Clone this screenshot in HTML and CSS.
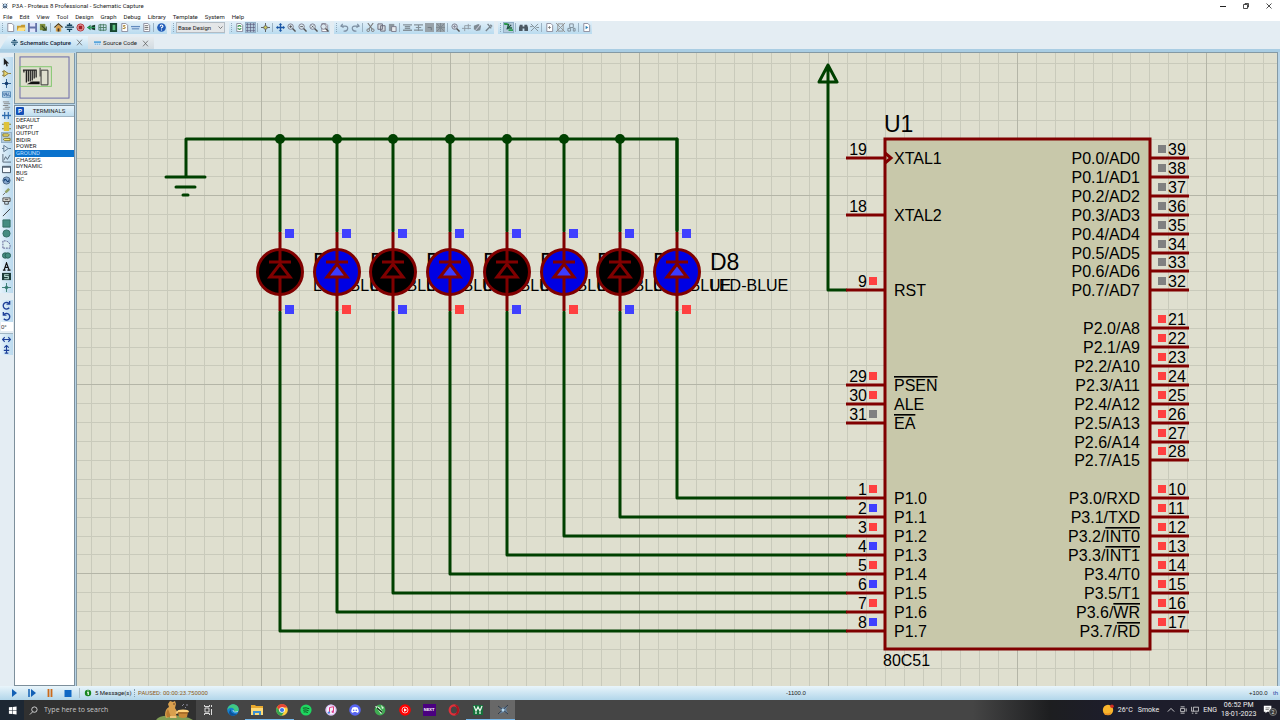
FILE: index.html
```html
<!DOCTYPE html>
<html lang="en">
<head>
<meta charset="utf-8">
<title>P3A - Proteus 8 Professional - Schematic Capture</title>
<link rel="stylesheet" href="styles.css">
</head>
<body>
<div class="app">
  <header class="titlebar">
    <svg class="app-icon" viewBox="0 0 10 10"><circle cx="5" cy="5" r="3" fill="#6d87a5"/><path d="M2 2l6 6M8 2l-6 6" stroke="#43505e"/><circle cx="5" cy="4" r="1.4" fill="#b9d5ee"/></svg>
    <h1 class="title">P3A - Proteus 8 Professional - Schematic Capture</h1>
    <div class="window-buttons">
      <button aria-label="Minimize"><svg viewBox="0 0 10 10"><path d="M2 5.5h6" stroke="#222" fill="none"/></svg></button>
      <button aria-label="Restore"><svg viewBox="0 0 10 10"><path d="M2.500 3.500h4v4h-4zM4 3.500V2.500h3.500v3.500h-1" stroke="#222" stroke-width=".8" fill="none"/></svg></button>
      <button aria-label="Close"><svg viewBox="0 0 10 10"><path d="M2.500 2.500l5 5M7.500 2.500l-5 5" stroke="#222" stroke-width=".8" fill="none"/></svg></button>
    </div>
  </header>
  <nav class="menubar">
    <button>File</button><button>Edit</button><button>View</button><button>Tool</button><button>Design</button><button>Graph</button><button>Debug</button><button>Library</button><button>Template</button><button>System</button><button>Help</button>
  </nav>
  <div class="toolbars">
    <div class="toolbar" data-icons="new open save import | home schem pcb view3d gerber explorer bom source notes | help"></div>
    <div class="toolbar"><div class="design-box"><select class="design-select" aria-label="Design"><option>Base Design</option></select><svg class="chevron" viewBox="0 0 10 10"><path d="M1 3l4 4 4-4" stroke="#555" fill="none" stroke-width="1.500"/></svg></div></div>
    <div class="toolbar" data-icons="refresh grid* | origin | pan zoomin zoomout zoomall zoomarea"></div>
    <div class="toolbar" data-icons="undo redo | cut copy paste | blockcopy blockmove blockrot blockdel | pick make pack decompose"></div>
    <div class="toolbar" data-icons="wire* | find props | newsheet delsheet exit | erc"></div>
  </div>
  <div class="tabs">
    <button class="tab tab-active" id="tab-schematic"><svg viewBox="0 0 10 10"><path d="M5 0v2M2 2.500h6M2 4.500h6M0 4.500h3M7 4.500h3M2 7h6M5 7v3" stroke="#174b6b" stroke-width="1.500"/></svg>Schematic Capture<svg class="tab-x" viewBox="0 0 10 10"><path d="M1.500 1l7 8M8.500 1l-7 8" stroke="#555"/></svg></button>
    <button class="tab" id="tab-source"><svg viewBox="0 0 10 10"><path d="M0 2h10v6H0z" fill="#cfe6f7"/><path d="M0 2h10v2H0z" fill="#3c95d6"/><path d="M1 6h8" stroke="#4c84b5" stroke-dasharray="2 1"/></svg>Source Code<svg class="tab-x" viewBox="0 0 10 10"><path d="M1.500 1l7 8M8.500 1l-7 8" stroke="#555"/></svg></button>
  </div>
  <main class="workspace">
    <div class="mode-bar">
      <div class="modes" data-icons="arrow component junction label script bus chip terminal* pin graph popup generator probe meter line rect circle arc path text symbol marker"></div>
      <div class="modes-rotate" data-icons="cw ccw"></div>
      <input class="angle" type="text" value="0°" aria-label="Rotation angle">
      <div class="modes-mirror" data-icons="mirrorx mirrory"></div>
    </div>
    <aside class="side">
      <div class="overview">
        <svg viewBox="0 0 60 51"><rect x="5" y="4" width="50" height="42" fill="none" stroke="#6969a8"/><rect x="5" y="14" width="32" height="20" fill="none" stroke="#7fc66c"/><path d="M8 17.500h14M9 17v3M11.500 17v13M13.500 17v12M15.500 17v12M17.500 17v11M19.500 17v9M21.500 17v8" stroke="#222" stroke-width="1.300" fill="none"/><path d="M12 32l5-3h8v3z" fill="#111"/><path d="M25.500 15v9M26.500 17.500h7v15h-7z" stroke="#333" fill="none"/></svg>
      </div>
      <section class="picker">
        <div class="picker-head"><button class="pick">P</button><h2>TERMINALS</h2></div>
        <ul class="terminals"><li>DEFAULT</li><li>INPUT</li><li>OUTPUT</li><li>BIDIR</li><li>POWER</li><li class="chosen">GROUND</li><li>CHASSIS</li><li>DYNAMIC</li><li>BUS</li><li>NC</li></ul>
      </section>
    </aside>
    <svg class="sheet" id="sheet" viewBox="77 53 1200 633" role="img" aria-label="Schematic sheet">
      <defs>
        <pattern id="grid" x="72" y="6" width="189" height="189" patternUnits="userSpaceOnUse">
          <path class="minor" d="M19.500 0v189M38.500 0v189M57.500 0v189M76.500 0v189M95.500 0v189M113.500 0v189M132.500 0v189M151.500 0v189M170.500 0v189M0 19.500h189M0 38.500h189M0 57.500h189M0 76.500h189M0 95.500h189M0 114.500h189M0 133.500h189M0 152.500h189M0 170.500h189"/>
          <path class="major" d="M.5 0v189M0 .5h189"/>
        </pattern>
      </defs>
      <rect x="-2000" y="-2000" width="6000" height="5000" fill="url(#grid)"/>
      <g id="drawing"></g>
    </svg>
  </main>
  <footer class="statusbar">
    <div class="sim">
      <button aria-label="Play"><svg viewBox="0 0 10 10"><path d="M3 1l5 4-5 4z" fill="#1260b5"/></svg></button>
      <button aria-label="Step"><svg viewBox="0 0 10 10"><path d="M2 1v8" stroke="#1260b5" stroke-width="1.500"/><path d="M4 1l5 4-5 4z" fill="#1260b5"/></svg></button>
      <button aria-label="Pause"><svg viewBox="0 0 10 10"><path d="M3.500 1v8M6.500 1v8" stroke="#cc6a1a" stroke-width="1.800"/></svg></button>
      <button aria-label="Stop"><svg viewBox="0 0 10 10"><path d="M1.500 2h7v7h-7z" fill="#1068c4"/></svg></button>
    </div>
    <div class="messages"><svg viewBox="0 0 10 10"><circle cx="5" cy="5" r="4" fill="#16861f"/><path d="M5 2v1M4 4.500h1.300v3" stroke="#fff" stroke-width="1.400" fill="none"/></svg>5 Message(s)</div>
    <div class="sim-state">PAUSED: 00:00:23.750000</div>
    <div class="coord-x">-1100.0</div>
    <div class="coord-y">+100.0</div>
    <div class="unit">th</div>
  </footer>
</div>
<footer class="taskbar">
  <button class="start" aria-label="Start"><svg viewBox="0 0 10 10"><path d="M1 1.500l3.700-.5v3.700H1zM5.300 1L9.500.5v4.200H5.300zM1 5.300h3.700V9L1 8.500zM5.300 5.300h4.200v4.200l-4.200-.5z" fill="#fff"/></svg></button>
  <label class="search">
    <svg class="lens" viewBox="0 0 10 10"><circle cx="6" cy="4" r="3" fill="none" stroke="#ddd"/><path d="M4 6.500L1 9.500" stroke="#ddd"/></svg>
    <input type="text" placeholder="Type here to search">
    <svg class="bear" viewBox="0 0 40 20"><path d="M0 20Q4 15 14 16Q27 14 37 20z" fill="#7f9d55"/><path d="M12 4l2-3 3 1 2-1 1 3-1 4 3 5-2 1 1 4h-5l-2-1-4 1-1-3q0-6 4-8z" fill="#d9a04e"/><path d="M12 9q-3 4-1 8h4z" fill="#b97a30"/><circle cx="18" cy="4" r=".7" fill="#422"/><path d="M14 17h6M20 13l4-2" stroke="#efc47c" stroke-width="2"/><ellipse cx="27" cy="11.500" rx="6" ry="2" fill="#ffd27a"/><path d="M22 12h10l-1 5q-4 2-8 0z" fill="#c88937"/><path d="M22 13h10" stroke="#8e561c"/><path d="M26 6l2-2M30 5l2 0M29 8l1-1" stroke="#889"/></svg>
  </label>
  <div class="apps">
    <button aria-label="Task View"><svg viewBox="0 0 12 12"><path d="M3 4h4v4H3zM2.500 1v1.500h5V1M2.500 11V9.500h5V11M9.500 1v2M9.500 5v6" stroke="#ddd" fill="none"/></svg></button>
    <button aria-label="Edge"><svg viewBox="0 0 12 12"><circle cx="6" cy="6" r="5.800" fill="#1683d0"/><path d="M.3 6C1 1 5 0 7 .3c4 .8 5 4 4.700 6-1 2-4 2-4.500.5C8 4 3 2 .3 6z" fill="#41c982"/><path d="M4 5q-1 5 6 5Q7 12.500 4 11.500 0 9 4 5z" fill="#0c529b"/><path d="M6 6q0 3 5 1.500" stroke="#e1f4ff" fill="none" stroke-width=".7"/></svg></button>
    <button class="running" aria-label="File Explorer"><svg viewBox="0 0 12 12"><path d="M0 1h4l1 1h7v9H0z" fill="#e9a92e"/><path d="M0 4h12v7H0z" fill="#ffda75"/><path d="M2 7h8v4H8V9H4v2H2z" fill="#3b8fd1"/></svg></button>
    <button class="running" aria-label="Chrome"><svg viewBox="0 0 12 12"><circle cx="6" cy="6" r="5.800" fill="#ffcf3d"/><path d="M1 3a5.800 5.800 0 0 1 10.300.5H6L3.500 7z" fill="#e64535"/><path d="M.8 3.200A5.800 5.800 0 0 0 5.600 11.800L8 8 4 7.500z" fill="#36a852"/><circle cx="6" cy="6" r="2.800" fill="#fff"/><circle cx="6" cy="6" r="2.100" fill="#3b78e7"/></svg></button>
    <button aria-label="Spotify"><svg viewBox="0 0 12 12"><circle cx="6" cy="6" r="5.600" fill="#1ed760"/><path d="M2.800 4.200q3.500-1 6.500.6M3.200 6.200q3-.8 5.400.5M3.600 8q2.300-.6 4.200.5" stroke="#152" fill="none"/></svg></button>
    <button aria-label="iTunes"><svg viewBox="0 0 12 12"><circle cx="6" cy="6" r="5.500" fill="#f5f0fb"/><circle cx="6" cy="6" r="5" fill="none" stroke="#c8a0ef" stroke-width=".8"/><path d="M4.500 8.500V3.500L8.500 2.700v5" stroke="#e13a80" fill="none"/><circle cx="3.900" cy="8.600" r="1.200" fill="#4f8eea"/><circle cx="7.800" cy="7.800" r="1.200" fill="#dc4292"/></svg></button>
    <button aria-label="Discord"><svg viewBox="0 0 12 12"><circle cx="6" cy="6" r="5.800" fill="#5865f2"/><path d="M3.500 3.500q2.500-1 5 0 1.300 2 1.200 4.500L8 9l-.7-1H4.700L4 9l-1.700-1q-.1-2.500 1.200-4.500z" fill="#fff"/><circle cx="4.700" cy="6.200" r=".8" fill="#5865f2"/><circle cx="7.300" cy="6.200" r=".8" fill="#5865f2"/></svg></button>
    <button aria-label="Game"><svg viewBox="0 0 12 12"><circle cx="6" cy="6" r="5.400" fill="#3fae52"/><path d="M1 2l4 1 4 5-2 2z" fill="#e8f3e8"/><path d="M3 3l6 5-1 1-5-4z" fill="#123d19"/><path d="M7 1l3 3-2 1z" fill="#dff0df"/></svg></button>
    <button aria-label="YouTube Music"><svg viewBox="0 0 12 12"><circle cx="6" cy="6" r="5.800" fill="#f00"/><circle cx="6" cy="6" r="3" fill="none" stroke="#fff" stroke-width=".7"/><path d="M5 4.300l3 1.700-3 1.700z" fill="#fff"/></svg></button>
    <button aria-label="NEXT"><span class="next-logo">NEXT</span></button>
    <button aria-label="Opera"><svg viewBox="0 0 12 12"><ellipse cx="6" cy="6" rx="4.300" ry="4.700" fill="none" stroke="#e0303a" stroke-width="2.300"/><path d="M7 1q4 0 4 5t-4 5q2-2 2-5t-2-5z" fill="#a8141f"/></svg></button>
    <button class="running" aria-label="Keil"><svg viewBox="0 0 12 12"><path d="M1 1h10v10H1z" fill="#15703b"/><path d="M2 2l2 5 2-4 2 4 2-5M4 8v2M8 8v2" stroke="#e4f4e7" stroke-width="1.300" fill="none"/></svg></button>
    <button class="running current" aria-label="Proteus"><svg viewBox="0 0 12 12"><path d="M1 2l3 2 4-1 3-2-2 4 2 5-4-2-5 2 2-4z" fill="#6583a0"/><path d="M1 2l10 8M11 1L1 10" stroke="#242b35" stroke-width=".8"/><circle cx="6" cy="6" r="1.500" fill="#b7d9ee"/></svg></button>
  </div>
  <div class="tray">
    <svg class="sun" viewBox="0 0 12 12"><circle cx="6" cy="6" r="5.200" fill="#f9b52c"/><path d="M1 8q4 3 8 0l-1 3H3z" fill="#e98f24"/><circle cx="10" cy="2.200" r="1.800" fill="#d12e24"/></svg>
    <span class="temp">26°C</span><span class="weather">Smoke</span>
    <svg viewBox="0 0 10 10"><path d="M1 7l4-4 4 4" stroke="#eee" fill="none"/></svg>
    <svg viewBox="0 0 10 10"><path d="M2 3h5v4H2zM2 1h5M2 9h5M9 3v4" stroke="#ddd" fill="none"/></svg>
    <svg viewBox="0 0 10 10"><path d="M3 1.500h6.500v5H3zM.5 1v5.500h3M5 9h3M1 9h2" stroke="#ddd" fill="none"/></svg>
    <span class="lang">ENG</span>
    <span class="clock"><span>06:52 PM</span><span>18-01-2023</span></span>
    <button class="notices" aria-label="Notifications"><svg viewBox="0 0 12 12"><path d="M1 1h9v7H5l-2 2V8H1z" fill="#fff"/><path d="M3 3.500h5M3 5.500h4" stroke="#444" stroke-width=".8"/></svg><span class="count">2</span></button>
  </div>
</footer>
<script src="app.js"></script>
</body>
</html>
```

FILE: styles.css
```css
* { box-sizing: border-box; }
body {
  margin: 0;
  height: 100vh;
  display: flex;
  flex-direction: column;
  overflow: hidden;
  background: #e4edf3;
  color: #222;
  font: 6px/8px "Liberation Sans", Arial, sans-serif;
}
button { border: 0; padding: 0; margin: 0; background: none; font: inherit; color: inherit; }
svg { display: block; flex: none; }
.app { flex: 1; min-height: 0; display: flex; flex-direction: column; }

.titlebar { height: 12px; display: flex; align-items: center; background: #fff; padding-left: 1px; }
.app-icon { width: 8px; height: 8px; margin-right: 3px; }
.title { margin: 0; font: 400 6px/8px Roboto, sans-serif; }
.window-buttons { margin-left: auto; display: flex; }
.window-buttons button { width: 23px; height: 12px; display: grid; place-items: center; }
.window-buttons svg { width: 10px; height: 10px; }

.menubar { height: 9px; display: flex; gap: 7px; padding-left: 3px; background: #fff; font-family: Roboto, sans-serif; }

.toolbars { height: 15px; display: flex; gap: 4px; align-items: flex-start; }
.toolbar {
  height: 13px;
  display: flex;
  align-items: center;
  background: linear-gradient(#e3f0f9, #b9dbef);
}
.toolbar::before { content: ""; width: 1px; height: 9px; margin: 0 2px; background: repeating-linear-gradient(#8fa9bc 0 1px, transparent 1px 2px); }
.tool { width: 11px; height: 11px; display: grid; place-items: center; }
.tool svg { width: 9px; height: 9px; }
.tool-on { background: #b4cbdc; outline: 1px solid #93b0c8; outline-offset: -1px; }
.divider { width: 1px; height: 9px; margin: 0 2px 0 1px; background: #9bb2c3; }
.design-box { position: relative; width: 49px; }
.design-select {
  display: block;
  appearance: none;
  width: 100%;
  height: 11px;
  padding: 0 1px;
  border: 1px solid #b3bcc4;
  border-radius: 0;
  background: #e4e6e8;
  color: #222;
  font: 6px/8px Roboto, sans-serif;
}
.chevron { position: absolute; right: 2px; top: 3px; width: 5px; height: 5px; pointer-events: none; }

.tabs { height: 16px; display: flex; align-items: flex-end; border-bottom: 3px solid #a9cde3; }
.tab {
  height: 12px;
  display: flex;
  align-items: center;
  gap: 2px;
  padding: 0 5px 0 6px;
  background: linear-gradient(#e6ebee, #d2dbe1);
  font-family: Roboto, sans-serif;
}
.tab svg { width: 7px; height: 7px; }
.tab .tab-x { margin-left: 3px; }
.tab-active { height: 13px; padding-left: 11px; background: linear-gradient(#eaf5fc, #b9dbef); clip-path: polygon(8px 0, 100% 0, 100% 100%, 0 100%); color: #123; font-weight: 500; }

.workspace { flex: 1; min-height: 0; display: flex; background: #b7d3e6; padding-top: 1px; }
.mode-bar { width: 14px; flex: none; background: #e4edf3; padding: 4px 1px 0 0; }
.modes, .modes-rotate, .modes-mirror { display: grid; grid-auto-rows: 1fr; justify-items: center; background: linear-gradient(90deg, #e6f3fb, #b9d9ee); }
.modes { height: 236px; margin-bottom: 7px; }
.modes-rotate { height: 22px; }
.modes-mirror { height: 22px; margin-top: 2px; border-top: 1px solid #9fb5c4; }
.mode-bar .tool { height: 100%; }
.angle { width: 12px; height: 9px; margin: 0 0 0 1px; padding: 0; border: 0; background: #fff; color: #333; font: 6px/8px "Liberation Sans", sans-serif; display: block; }
.side { width: 61px; flex: none; display: flex; flex-direction: column; }
.overview { height: 51px; border: 1px solid #7f98a8; border-top: 0; background: #dfdfcf; }
.overview svg { width: 100%; height: 100%; }
.picker { flex: 1; margin-top: 1px; display: flex; flex-direction: column; border: 1px solid #7d8f9b; background: #fff; min-height: 0; }
.picker-head { height: 11px; display: flex; align-items: center; background: linear-gradient(#e6f3fb, #c0deef); border-bottom: 1px solid #9fb5c4; }
.picker-head h2 { margin: 0; flex: 1; text-align: center; font: 400 6px/8px Roboto, sans-serif; }
.pick { width: 8px; height: 8px; margin-left: 1px; background: #1450b8; color: #fff; font-weight: 700; border-radius: 1px; }
.terminals { list-style: none; margin: 0; padding: 0; display: grid; grid-template-rows: repeat(10, 1fr); height: 66px; line-height: 6px; font-family: Roboto, sans-serif; }
.terminals li { padding-left: 1px; }
.chosen { background: #0a72cc; color: #b8dcff; }

.sheet { flex: 1; min-width: 0; height: 100%; background: #dfdfcf; margin: 0 3px 0 2px; outline: 1px solid #8499a4; overflow: hidden; }
.minor { stroke: #c9cabb; fill: none; }
.major { stroke: #b4b5a7; fill: none; }
.wire { stroke: #004000; stroke-width: 3; fill: none; stroke-linecap: round; stroke-linejoin: round; }
.node { fill: #004000; }
.pin { stroke: #800000; stroke-width: 3; fill: none; }
.chip { stroke: #800000; stroke-width: 3; fill: #c8c8aa; }
.led { stroke: #800000; stroke-width: 3; fill: #000; }
.led-lit { fill: #0000e4; }
.diode { stroke: #800000; stroke-width: 3; fill: none; }
.diode-lit { fill: #3c3cff; }
.hi { fill: #ff4040; }
.lo { fill: #4040ff; }
.float { fill: #808080; }
.label { font: 16px "Liberation Sans", Arial, sans-serif; fill: #000; }
.ref { font-size: 23px; }
.end { text-anchor: end; }
.bar { text-decoration: overline; text-decoration-thickness: 2px; }

.statusbar { height: 14px; flex: none; display: grid; grid-template-columns: 80px 55px 648px 1fr 24px 7px; align-items: center; background: linear-gradient(#e9f5fb, #b2d6ea); }
.statusbar > div { white-space: nowrap; }
.sim { display: flex; gap: 8px; padding-left: 9px; border-right: 1px solid #a7bdca; }
.sim svg, .messages svg { width: 10px; height: 10px; }
.messages { display: flex; align-items: center; gap: 3px; padding-left: 4px; border-right: 1px dotted #849caa; font-family: Roboto, sans-serif; }
.messages svg { width: 8px; height: 8px; }
.sim-state { padding-left: 3px; color: #8b5a20; font-family: Roboto, sans-serif; }
.coord-x { padding-left: 3px; }
.unit { color: #1d39a0; }

.taskbar {
  height: 20px;
  flex: none;
  display: flex;
  align-items: stretch;
  background: linear-gradient(90deg, #454545 76%, #1d1e20 82%, #1d1d2c 87%, #1d1d29);
  color: #eee;
  font: 8px/10px "Open Sans", sans-serif;
}
.start { width: 24px; background: #1d2733; display: grid; place-items: center; }
.start svg { width: 9px; height: 9px; }
.search { width: 172px; display: flex; align-items: center; padding-left: 5px; background: #303030; }
.lens { width: 9px; height: 9px; }
.search input { flex: 1; min-width: 0; margin-left: 6px; padding: 0; border: 0; background: none; color: #ccc; font: 7px/10px "Open Sans", sans-serif; }
.search input::placeholder { color: #c6c6c6; opacity: 1; }
.bear { width: 40px; height: 20px; }
.apps { width: 319px; display: grid; grid-template-columns: repeat(13, 1fr); }
.apps button { display: grid; place-items: center; }
.apps svg { width: 12px; height: 12px; }
.running { box-shadow: inset 0 -1px #76b9ed; }
.current { background: #686868; }
.next-logo { width: 13px; height: 12px; background: #4a0080; color: #fff; font: 700 4px/12px "Liberation Sans", sans-serif; }
.tray { margin-left: auto; display: flex; align-items: center; padding-right: 3px; font: 7px/8px Roboto, sans-serif; }
.tray svg { width: 8px; height: 8px; margin-right: 4px; }
.tray .sun { width: 12px; height: 12px; margin-right: 4px; }
.temp { margin-right: 5px; }
.weather { margin-right: 8px; }
.lang { margin-right: 4px; }
.clock { width: 34px; display: grid; justify-items: center; margin-right: 8px; line-height: 9px; white-space: nowrap; }
.notices { position: relative; width: 14px; height: 12px; }
.tray .notices svg { width: 10px; height: 10px; margin: 0; }
.count { position: absolute; right: 0; bottom: 0; width: 8px; height: 8px; border-radius: 4px; background: #333; border: 1px solid #777; font: 5px/6px Roboto, sans-serif; }
```

FILE: app.js
```js
// Icon bodies, each drawn on a 10 by 10 grid.
const s = (d, c = '#555', w = 1) => `<path d="${d}" stroke="${c}" stroke-width="${w}" fill="none"/>`;
const f = (d, c) => `<path d="${d}" fill="${c}"/>`;
const lens = (extra) => `<circle cx="4" cy="4" r="3" fill="#dbe7ef" stroke="#778"/>` + s('M6.200 6.200L9.500 9.500', '#555', 1.600) + extra;
const sheet = '<path d="M2 .5h4.500L8.500 2.500v7H2z" fill="#fff" stroke="#889"/>';
const icons = {
  new: sheet,
  open: f('M0 3h4l1-1h4v7H0z', '#c69a30') + f('M2 5h8L8 9H0z', '#ffe184'),
  save: f('M0 0h10v10H0z', '#6573a9') + f('M2 0h6v4H2zM2 6h6v4H2z', '#dfe4fa'),
  import: f('M1 1h6v7H1z', '#7f8f3b') + s('M3 3l5 5M8 4v4H4', '#35491f', 1.300),
  home: s('M.5 5L5 1l4.500 4', '#533b14', 1.300) + f('M2 5l3-3 3 3v4.500H2z', '#d9a14a') + f('M4 6h2v3.500H4z', '#432'),
  schem: s('M5 0v2M2 2.500h6M2 4.500h6M0 4.500h3M7 4.500h3M2 7h6M5 7v3', '#15425c', 1.400),
  pcb: '<circle cx="5" cy="5" r="4" fill="#e6a5a5" stroke="#b52f33"/>' + f('M3 3h4v4H3z', '#a21d25'),
  view3d: f('M0 5l4-3v6z', '#187b40') + f('M5 3l4-1v6l-4-1z', '#173d2c') + s('M0 5h9', '#2aa15a'),
  gerber: s('M1 2h8v6H1zM3 1v8M6 1v8M1 5h8', '#4b7d64'),
  explorer: f('M1 0h8v10H1z', '#18452f') + f('M4 2h3v6H4z', '#5cc07d'),
  bom: sheet + s('M6 3q-3-1-2 1l2 1q0 2-3 1', '#a3791a'),
  source: f('M0 3h10v4H0z', '#c5daf2') + s('M0 4h10M1 6.500h8', '#4c78b0'),
  notes: sheet + s('M3 3h4M3 5h4M3 7h4', '#666'),
  help: '<circle cx="5" cy="5" r="4.800" fill="#235db9"/>' + s('M3.500 3.800q0-1.500 1.500-1.500t1.600 1.400Q6.500 4.700 5 5.200V6.200M5 7.300v1', '#fff', 1.200),
  refresh: sheet + s('M3 4q2-2 4 0M7 6q-2 2-4 0', '#2c8b42', 1.300),
  grid: s('M0 1.500h10M0 5h10M0 8.500h10M1.500 0v10M5 0v10M8.500 0v10', '#557', .7),
  origin: s('M5 0v10M0 5h10', '#555') + '<circle cx="5" cy="5" r="2" fill="#cfcf62" stroke="#666"/>',
  pan: s('M5 1v8M1 5h8', '#1b56a5', 1.500) + f('M5 0l2 2H3zM5 10l2-2H3zM0 5l2-2v4zM10 5L8 3v4z', '#1b56a5'),
  zoomin: lens(s('M2.500 4h3M4 2.500v3')), zoomout: lens(s('M2.500 4h3')), zoomall: lens(s('M3 3l2 2M5 3L3 5')),
  zoomarea: sheet + lens(''),
  undo: s('M3 1L1 3.500 4 5M1 3.500h5q3 0 2.500 3T4 9', '#7d8fa2', 1.300),
  redo: s('M7 1l2 2.500L6 5M9 3.500H4Q1 3.500 1.500 6.500T6 9', '#7d8fa2', 1.300),
  cut: s('M2 0l5 7M8 0L3 7', '#777', 1.200) + '<circle cx="2.500" cy="8" r="1.500" fill="none" stroke="#777"/><circle cx="7.500" cy="8" r="1.500" fill="none" stroke="#777"/>',
  copy: '<path d="M1 1h5v6H1zM4 3h5v6H4z" fill="#d7dde2" stroke="#667"/>',
  paste: f('M1 1h6v8H1z', '#8d979e') + '<path d="M4 4h5v5.500H4z" fill="#e6eaed" stroke="#778"/>',
  blockcopy: s('M0 2h10M0 8h10M2 4h6M2 6h6', '#84919a', 1.500),
  blockmove: s('M0 2h10M2 5h6M0 8h10M5 2v7', '#84919a', 1.300),
  blockrot: f('M0 0h10v10H0z', '#98a2a9') + s('M3 5h4v3', '#6d777f'),
  blockdel: f('M0 0h10v10H0z', '#98a2a9') + s('M1 1l8 8M9 1L1 9M5 0v10M0 5h10', '#7c878f'),
  pick: lens(s('M2 4h4M4 2v4', '#889')),
  make: s('M0 6h10M3 3v6M7 1v6M3 3h7', '#8d99a2'),
  pack: f('M1 3l5-2 3 2-1 5-4 1-3-2z', '#7e8a93') + s('M3 8l5-6', '#dde'),
  decompose: s('M2 9l5-5M4 1l4 5M7 2l2 2', '#78848d', 1.500),
  wire: s('M1 1.500h4l-1 4h5', '#176836', 1.600) + s('M8 2L3 7', '#244', 1.200) + f('M5 7h5v2H5zM0 0h4v2H0z', '#2e9f51'),
  find: f('M1 2h3v7H0V5zM6 2h3l1 3v4H6zM4 4h2v2H4z', '#4b5863'),
  props: s('M1 1l8 8M9 1L1 9M0 4h3M7 5h3', '#7f8b94'),
  newsheet: sheet + s('M3.500 5h3M5 3.500v3', '#777'),
  delsheet: s('M2 1h6v8H2zM0 0l10 10M10 0L0 10', '#8e8e8e'),
  exit: s('M3 1h4v4H3zM1 6h3v3H1zM7 6h2v3H7z', '#7b8994'),
  erc: sheet + f('M4 3l3 2-3 2z', '#287eb6'),
  arrow: f('M2 0l6 6H5.500l1 3-1.500.5L4 6.500 2 8z', '#222'),
  component: '<path d="M2 1.500l5 3.500-5 3.500z" fill="#e8d771" stroke="#887636"/>' + s('M0 3h2M0 7h2M7 5h3', '#887636'),
  junction: s('M5 0v10M0 5h10', '#235587') + '<circle cx="5" cy="5" r="2" fill="#163d70"/>',
  label: '<path d="M.5 2h9v6h-9z" fill="#cfe8fa" stroke="#4c81b0"/>' + s('M2 3v3h1.500V3M6 3.500H4.500V5H6v1.500H4.500M7.500 3v3.500H9', '#1d4f8c', .8),
  script: s('M1 1h7M2 3h7M1 5h6M3 7h6M1 9h7', '#777', .9),
  bus: s('M0 5h10', '#2b6bae', 1.600) + s('M3 1v8M7 1v8', '#2b6bae', 1.300),
  chip: f('M2 0h6v10H2z', '#dec33b') + s('M0 2.500h2M0 7.500h2M8 2.500h2M8 7.500h2', '#776c23'),
  terminal: '<path d="M1 1h6l1 1-1 1.500H1zM3 6h6v2.500H3L1.500 7z" fill="#f5e670" stroke="#807529"/>',
  pin: '<path d="M2 1.500l5 3.500-5 3.500z" fill="#dbe9f2" stroke="#56728a"/>' + s('M0 5h2M7 5h3', '#56728a'),
  graph: s('M1 0v9h9M2 7l2-4 2 3 3-5', '#506273'),
  popup: '<path d="M.5 1.500h9v7h-9z" fill="#f7fbfd" stroke="#345"/>' + s('M1 2.500h8', '#456'),
  generator: '<circle cx="5" cy="5" r="4" fill="#87a8cf" stroke="#45617f"/>' + s('M2 6q1-4 3-1t3-1', '#123f71', 1.200),
  probe: s('M1 9l3-3', '#666') + f('M3 5l4-4 2 2-4 4z', '#91a267'),
  meter: '<path d="M1 1h8v4H1z" fill="#e4e4dd" stroke="#444"/>' + s('M3 3h4M3 5v3h4V5', '#444'),
  line: s('M1 9l8-8', '#333'),
  rect: '<path d="M1 1h8v8H1z" fill="#448c80" stroke="#316c62"/>',
  circle: '<circle cx="5" cy="5" r="4" fill="#448c80" stroke="#316c62"/>',
  arc: '<path d="M1 9V1h3q5 1 5 6v2z" fill="#dceef2" stroke="#558" stroke-dasharray="2 1"/>',
  path: '<circle cx="3.500" cy="5" r="3" fill="#448c80" stroke="#285f56"/><circle cx="6.500" cy="5" r="3" fill="#448c80" stroke="#285f56"/>',
  text: s('M1 9h3M6 9h3.500M2.300 9L5 1l3 8M3.500 6h3', '#111', 1.300),
  symbol: f('M0 1h10v8H0z', '#1c3b38') + s('M7.500 3H3v2h4v2.500H2.500', '#b8ded5', 1.200),
  marker: s('M5 0v10M0 5h10', '#357a70') + f('M5 2.500L7.500 5 5 7.500 2.500 5z', '#357a70'),
  cw: s('M8 3A3.700 3.700 0 1 0 8 7.500M8.500 0v3.500H5', '#1d4099', 1.500),
  ccw: s('M2 3A3.700 3.700 0 1 1 2 7.500M1.500 0v3.500H5', '#1d4099', 1.500),
  mirrorx: s('M1 5h8M3 2.500L.5 5 3 7.500M7 2.500L9.500 5 7 7.500', '#1d4099', 1.200),
  mirrory: s('M5 1v8M2.500 3L5 .5 7.500 3M2 6h6M3 9h4', '#1d4099', 1.200)
};

document.querySelectorAll('[data-icons]').forEach((box) => {
  box.innerHTML = box.dataset.icons.split(' ').map((item) => {
    if (item === '|') return '<span class="divider"></span>';
    const on = item.endsWith('*');
    const name = item.replace('*', '');
    return `<button class="tool${on ? ' tool-on' : ''}" aria-label="${name}"><svg viewBox="0 0 10 10">${icons[name]}</svg></button>`;
  }).join('');
});

// Schematic: pins sit on rows of the sheet's grid.
const row = (k) => Math.round(158 + 18.9 * k);
const path = (cls, d) => `<path class="${cls}" d="${d}"/>`;
const square = (cls, x, y, size) => `<rect class="${cls}" x="${x}" y="${y}" width="${size}" height="${size}"/>`;
const label = (cls, x, y, t) => `<text class="label ${cls}" x="${x}" y="${y}">${t}</text>`;
// A leading "~" puts a bar over the part that follows it.
const barred = (t) => t.replace(/~(\w+)/, '<tspan class="bar">$1</tspan>');

const leftPins = [
  [0, 19, 'XTAL1', ''], [3, 18, 'XTAL2', ''], [7, 9, 'RST', 'hi'],
  [12, 29, '~PSEN', 'hi'], [13, 30, 'ALE', 'hi'], [14, 31, '~EA', 'float']
];
for (let i = 0; i < 8; i++) leftPins.push([18 + i, i + 1, `P1.${i}`, i % 2 ? 'lo' : 'hi']);

const rightPins = [];
const port3 = ['RXD', 'TXD', '~INT0', '~INT1', 'T0', 'T1', '~WR', '~RD'];
for (let i = 0; i < 8; i++) {
  rightPins.push([i, 39 - i, `P0.${i}/AD${i}`, 'float']);
  rightPins.push([9 + i, 21 + i, `P2.${i}/A${8 + i}`, 'hi']);
  rightPins.push([18 + i, 10 + i, `P3.${i}/${port3[i]}`, 'hi']);
}

const ledX = [280, 337, 393, 450, 507, 564, 620, 677];
let out = '';
ledX.forEach((x, i) => {
  out += label('ref', x + 33, 270, `D${i + 1}`) + label('', x + 33, 291, 'LED-BLUE');
});
out += path('wire', 'M186 176V139H677V230M166 177H205M176 187H195M183 195H188');
ledX.forEach((x, i) => {
  const lit = i % 2 === 1;
  const y = row(25 - i);
  out += path('wire', `M${x} 139V231M${x} 312V${y}H846`);
  out += `<circle class="led${lit ? ' led-lit' : ''}" cx="${x}" cy="272" r="22.500"/>`;
  out += path('pin', `M${x} 232V263M${x} 278V311M${x - 11} 262H${x + 11}`);
  out += path(`diode${lit ? ' diode-lit' : ''}`, `M${x} 264L${x + 10} 277H${x - 10}Z`);
  out += square('lo', x + 5, 229, 9) + square(lit ? 'hi' : 'lo', x + 5, 305, 9);
  if (i < 7) out += `<circle class="node" cx="${x}" cy="139" r="5"/>`;
});
out += path('wire', 'M828 65V290H846M828 65L837 82H819Z');
out += '<rect class="chip" x="885" y="139" width="265" height="510"/>';
out += path('pin', 'M885 153L891 158L885 163');
out += label('ref', 884, 132, 'U1') + label('', 883, 666, '80C51');
leftPins.forEach(([k, n, name, state]) => {
  const y = row(k);
  out += path('pin', `M846 ${y}H885`) + label('end', 867, y - 3, n) + label('', 894, y + 6, barred(name));
  if (state) out += square(state, 869, y - 13, 8);
});
rightPins.forEach(([k, n, name, state]) => {
  const y = row(k);
  out += path('pin', `M1150 ${y}H1189`) + label('', 1168, y - 3, n) + label('end', 1140, y + 6, barred(name));
  out += square(state, 1158, y - 13, 8);
});
document.getElementById('drawing').innerHTML = out;
```
